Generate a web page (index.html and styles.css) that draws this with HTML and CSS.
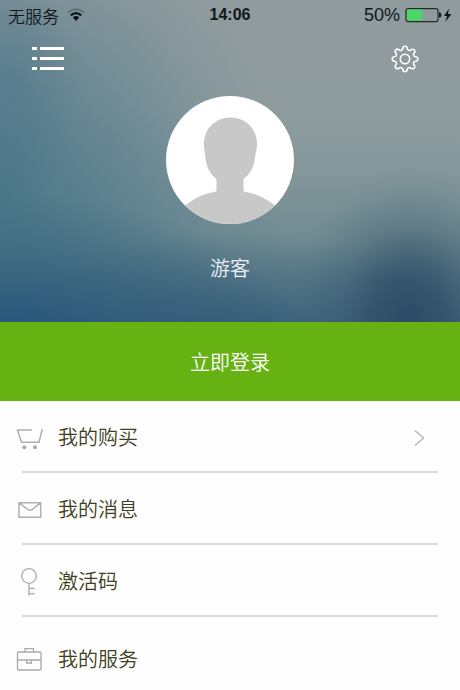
FILE: index.html
```html
<!DOCTYPE html>
<html lang="zh-CN">
<head>
<meta charset="utf-8">
<meta name="viewport" content="width=device-width, initial-scale=1">
<title>个人中心</title>
<link rel="stylesheet" href="styles.css">
</head>
<body>
<header class="hero">
  <div class="status">
    <div class="status-side">
      <span class="carrier">无服务</span>
      <svg class="wifi" width="18" height="14" viewBox="0 0 18 14" fill="none" aria-hidden="true">
        <path d="M1 4.6Q9-2.2 17 4.6" stroke="#5f7077" stroke-width="1.8"/>
        <path d="M3.700 7.400Q9 2.800 14.300 7.400" stroke="#0b1217" stroke-width="2.200"/>
        <path d="M5.800 9.400Q9 6.800 12.200 9.400L9 13Z" fill="#0b1217"/>
      </svg>
    </div>
    <time class="clock">14:06</time>
    <div class="status-side status-right">
      <span class="percent">50%</span>
      <svg width="47" height="16" viewBox="0 0 47 16" aria-hidden="true">
        <rect x="1" y="1.600" width="32" height="13" rx="2" fill="none" stroke="#22292c" stroke-width="1.200"/>
        <rect x="2" y="2.600" width="15.500" height="11" rx="1" fill="#4bd763"/>
        <path d="M34 5.300Q36.400 5.500 36.400 8T34 10.700Z" fill="#11181b"/>
        <path d="M44 1.500L39 9H42.100L40.300 14.700L46.500 7H43Z" fill="#11181b"/>
      </svg>
    </div>
  </div>
  <nav class="toolbar">
    <button class="icon-button" type="button" aria-label="菜单">
      <svg width="32" height="24" viewBox="0 0 32 24" fill="#fff" aria-hidden="true">
        <path d="M0 0h5v3H0zM8 0h24v3H8zM0 10h5v3H0zM8 10h24v3H8zM0 20h5v3H0zM8 20h24v3H8z"/>
      </svg>
    </button>
    <button class="icon-button" type="button" aria-label="设置">
      <svg width="28" height="28" viewBox="0 0 28 28" fill="none" stroke="#fff" stroke-width="1.600" stroke-linejoin="round" aria-hidden="true">
        <path d="M11.800 3.400A2.200 2.200 0 0 1 16.200 3.400A2.200 2.200 0 0 0 19.900 4.900A2.200 2.200 0 0 1 23.100 8.100A2.200 2.200 0 0 0 24.600 11.800A2.200 2.200 0 0 1 24.600 16.200A2.200 2.200 0 0 0 23.100 19.900A2.200 2.200 0 0 1 19.900 23.100A2.200 2.200 0 0 0 16.200 24.600A2.200 2.200 0 0 1 11.800 24.600A2.200 2.200 0 0 0 8.100 23.100A2.200 2.200 0 0 1 4.900 19.900A2.200 2.200 0 0 0 3.400 16.200A2.200 2.200 0 0 1 3.400 11.800A2.200 2.200 0 0 0 4.900 8.100A2.200 2.200 0 0 1 8.100 4.900A2.200 2.200 0 0 0 11.800 3.400Z"/>
        <circle cx="14" cy="14" r="4.700"/>
      </svg>
    </button>
  </nav>
  <svg class="avatar" width="128" height="128" viewBox="0 0 128 128" role="img" aria-label="头像">
    <defs><clipPath id="face"><circle cx="64" cy="64" r="64"/></clipPath></defs>
    <g clip-path="url(#face)">
      <rect width="128" height="128" fill="#fff"/>
      <path fill="#c8c8c8" d="M64.500 21.500C80 21.500 91 33 91 48C91 54 89.500 56 89 62C88 72 83 79 77.500 83V95.500C88 97 99 101.500 109 109.500V128H19V109.500C29 101.500 40 97 50.500 95.500V83C45 79 40.500 72 39.500 62C39 56 38 54 38 48C38 33 49 21.500 64.500 21.500Z"/>
    </g>
  </svg>
  <p class="name">游客</p>
</header>
<main>
  <button class="login" type="button">立即登录</button>
  <ul class="menu">
    <li class="item">
      <a class="link" href="#purchases">
        <svg class="icon" width="28" height="28" viewBox="0 0 28 28" fill="none" stroke="#b0b0b0" stroke-width="1.500" aria-hidden="true">
          <path d="M16 6H1.500L5.500 18.300H23L26.300 5"/>
          <circle cx="8.300" cy="23.300" r="2" fill="#aaa" stroke="none"/><circle cx="19" cy="23.300" r="2" fill="#aaa" stroke="none"/>
        </svg>
        <span class="label">我的购买</span>
        <svg class="chevron" width="12" height="18" viewBox="0 0 12 18" fill="none" stroke="#b2b2b2" stroke-width="1.300" aria-hidden="true"><path d="M2 1.500L10.500 9L2 16.500"/></svg>
      </a>
    </li>
    <li class="item">
      <a class="link" href="#messages">
        <svg class="icon" width="28" height="28" viewBox="0 0 28 28" fill="none" stroke="#b0b0b0" stroke-width="1.500" aria-hidden="true">
          <path d="M3 6.700H24.700V21.300H3ZM3 6.700L11.500 13.300Q14 14.800 16.500 13.300L24.700 6.700"/>
        </svg>
        <span class="label">我的消息</span>
      </a>
    </li>
    <li class="item">
      <a class="link" href="#code">
        <svg class="icon" width="28" height="28" viewBox="0 0 28 28" fill="none" stroke="#a9a9a9" stroke-width="1.300" aria-hidden="true">
          <circle cx="13" cy="8" r="7.300"/><path d="M13 15.300V27.500M13 20.300H18.700M13 25.700H18.700"/>
        </svg>
        <span class="label">激活码</span>
      </a>
    </li>
    <li class="item item-services">
      <a class="link" href="#services">
        <svg class="icon" width="28" height="28" viewBox="0 0 28 28" fill="none" stroke="#a9a9a9" stroke-width="1.300" aria-hidden="true">
          <rect x="1.500" y="6" width="23.500" height="18" rx="1"/><path d="M9 6V2.700H17.500V6M1.500 14H25M10.700 14V17H15.500V14"/>
        </svg>
        <span class="label">我的服务</span>
      </a>
    </li>
  </ul>
</main>
</body>
</html>
```
FILE: styles.css
```css
* {
  box-sizing: border-box;
}

body {
  margin: 0;
  background: #fefefe;
  font-family: "Liberation Sans", "Noto Sans CJK SC", sans-serif;
  font-size: 20px;
  font-weight: 350;
}

button {
  border: 0;
  padding: 0;
  background: none;
  font: inherit;
}

svg {
  display: block;
  flex: none;
}

.hero {
  display: flex;
  flex-direction: column;
  align-items: center;
  padding-bottom: 38px;
  background:
    radial-gradient(ellipse 26% 46% at 89% 98%, rgba(38, 68, 96, 0.85) 0%, rgba(40, 70, 98, 0.66) 30%, rgba(46, 76, 102, 0.28) 60%, rgba(50, 80, 104, 0.08) 84%, rgba(50, 80, 104, 0) 100%),
    radial-gradient(ellipse 52% 34% at 50% 106%, rgba(42, 82, 114, 0.7), rgba(42, 82, 114, 0.3) 50%, rgba(42, 82, 114, 0)),
    radial-gradient(ellipse 65% 46% at 0% 106%, rgba(30, 76, 120, 0.85), rgba(34, 80, 118, 0.4) 50%, rgba(36, 80, 120, 0)),
    radial-gradient(ellipse 18% 40% at 0% 26%, rgba(64, 110, 135, 0.4), rgba(64, 110, 135, 0)),
    radial-gradient(ellipse 62% 90% at 0% 60%, rgba(62, 112, 132, 0.8), rgba(66, 114, 134, 0.5) 40%, rgba(70, 116, 136, 0.12) 80%, rgba(70, 116, 136, 0)),
    linear-gradient(180deg, #909b9e 0%, #8f9c9f 34%, #85979b 52%, #738d93 72%, #5f7f8b 86%, #4e7186 100%);
}

.status {
  display: grid;
  grid-template-columns: 1fr auto 1fr;
  align-items: center;
  align-self: stretch;
  height: 30px;
  padding: 0 8px;
  color: #11181b;
}

.status-side {
  display: flex;
  align-items: center;
  gap: 8px;
}

.status-right {
  justify-content: flex-end;
  gap: 5px;
}

.carrier {
  font-size: 17px;
}

.clock {
  font-size: 16px;
  font-weight: 700;
}

.percent {
  font-size: 18px;
}

.toolbar {
  display: flex;
  align-items: center;
  justify-content: space-between;
  align-self: stretch;
  height: 58px;
  padding: 0 41px 0 32px;
}

.avatar {
  margin-top: 8px;
}

.name {
  margin: 30px 0 0;
  color: #e9f0f3;
  line-height: 30px;
}

.login {
  display: block;
  width: 100%;
  height: 79px;
  background: #66b213;
  color: #fff;
}

.menu {
  margin: 0;
  padding: 0 22px;
  list-style: none;
}

.item {
  border-bottom: 2px solid #d9d9d9;
}

.item-services {
  padding-top: 6px;
  border-bottom: 0;
}

.link {
  display: flex;
  align-items: center;
  height: 70px;
  padding-right: 13px;
  color: #3d4020;
  text-decoration: none;
}

.icon {
  margin: 4px 14px 0 -6px;
}

.chevron {
  margin-top: 4px;
}

.label {
  flex: 1;
}
```
